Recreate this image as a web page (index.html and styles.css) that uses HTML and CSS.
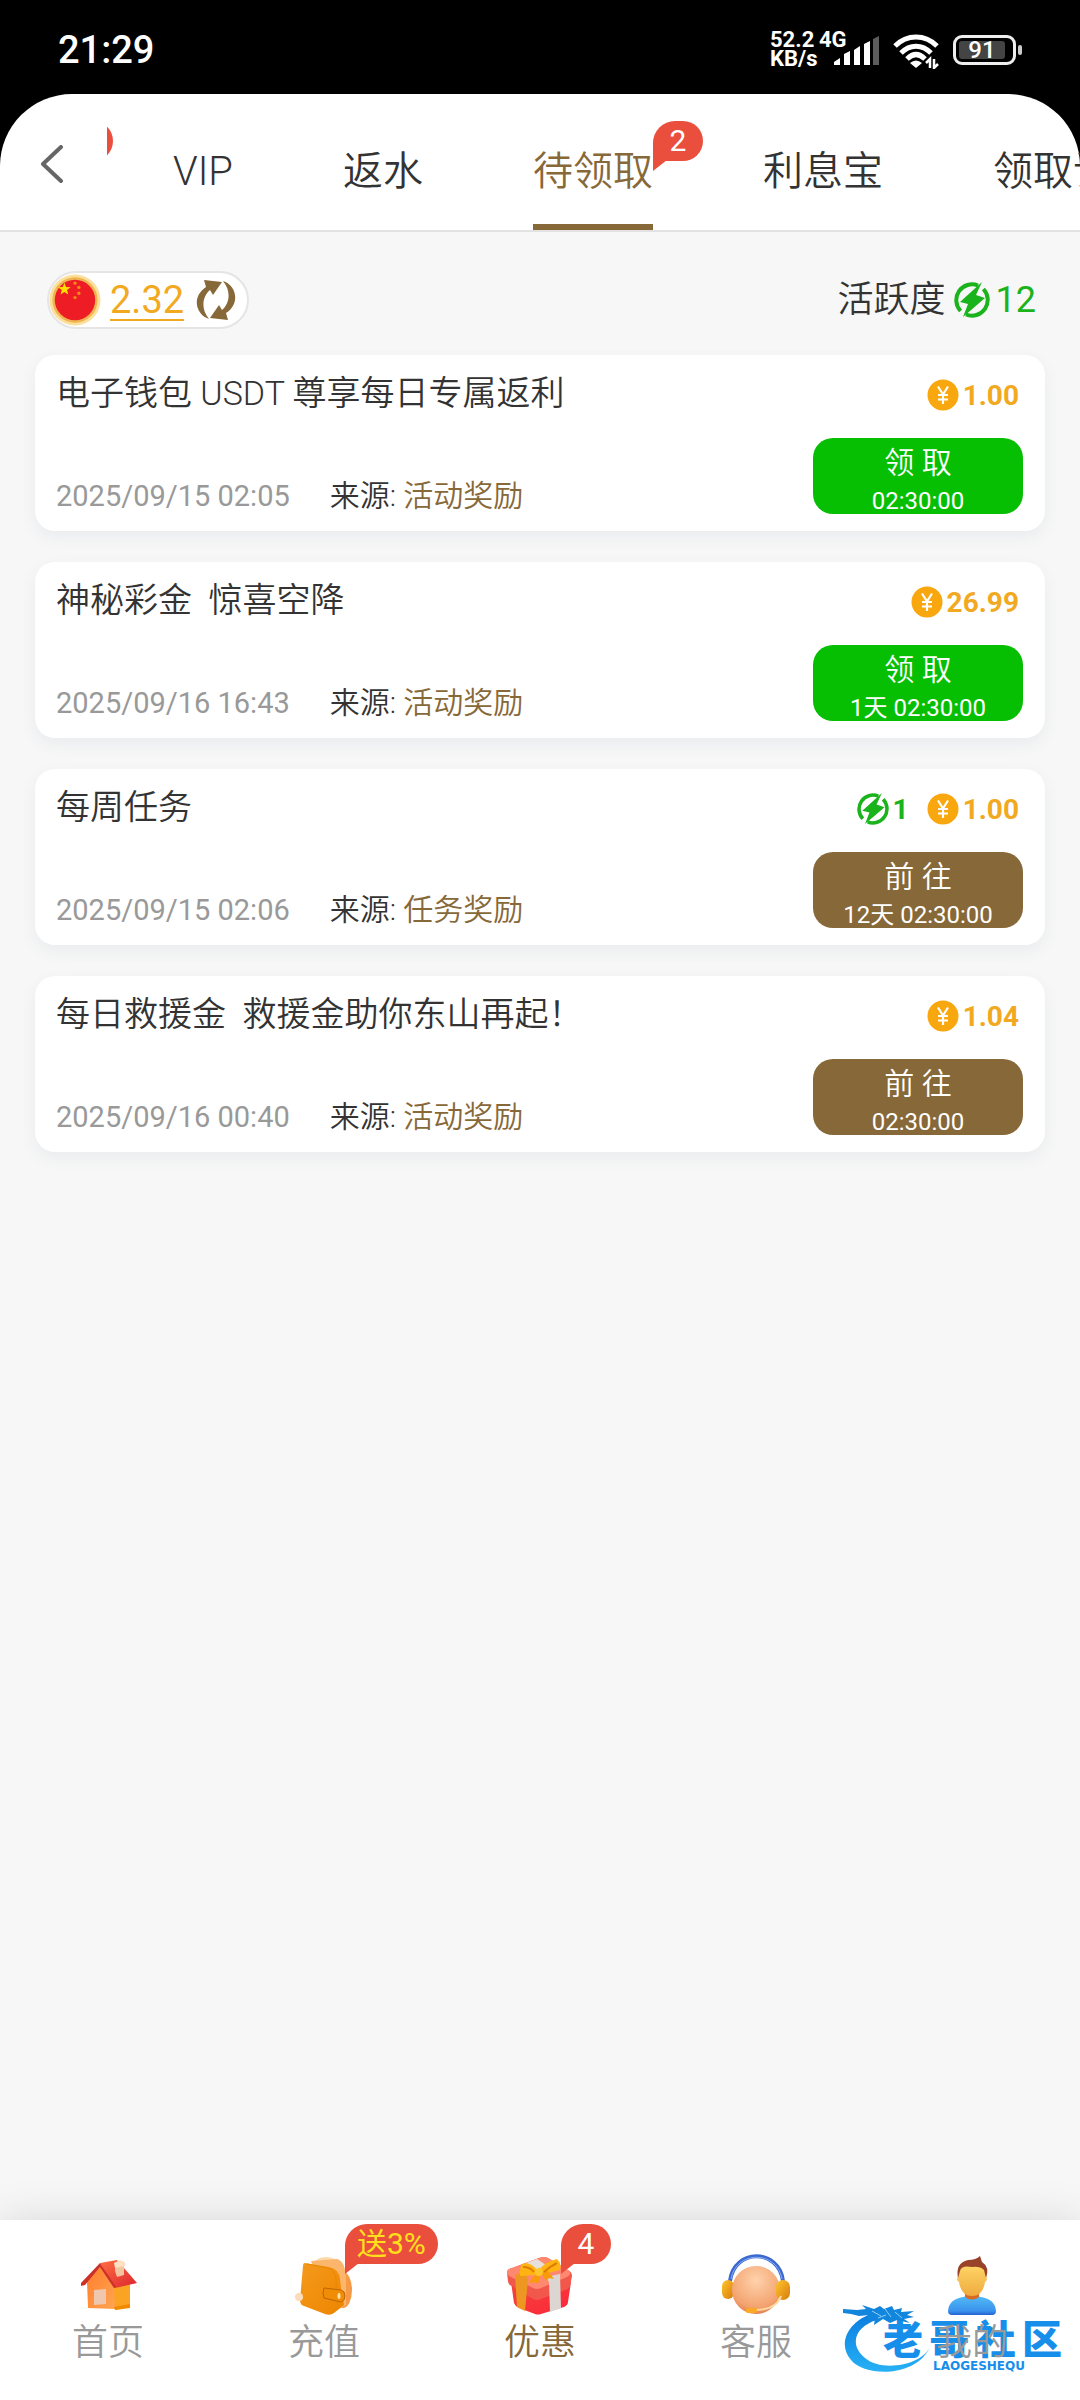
FILE: index.html
```html
<!DOCTYPE html>
<html lang="zh-CN">
<head>
    <meta charset="UTF-8">
    <meta name="viewport" content="width=device-width, initial-scale=1.0">
    <title>待领取</title>
    <link rel="stylesheet" href="styles.css">
</head>
<body>
    <!-- Shared icons -->
    <svg class="sprite" aria-hidden="true">
        <symbol id="bolt" viewBox="0 0 36 36">
            <path d="M24 3.500A15.800 15.800 0 0 0 6.600 29" fill="none" stroke="currentColor" stroke-width="4"/>
            <path d="M29.400 7A15.800 15.800 0 0 1 12 32.500" fill="none" stroke="currentColor" stroke-width="4"/>
            <path d="M28 0L6 20l8 2L9 35l22-19-9-3z" fill="currentColor"/>
        </symbol>
        <symbol id="coin" viewBox="0 0 32 32">
            <circle cx="16" cy="16" r="15.500" fill="#f9a70e"/>
            <path d="M11 7.500l5 8 5-8M16 15.500V25M11 16h10M11 20.500h10" fill="none" stroke="#fff" stroke-width="2.200"/>
        </symbol>
    </svg>

    <div class="status-bar">
        <span class="clock">21:29</span>
        <div class="status-icons">
            <div class="net-speed"><span>52.2</span><span>KB/s</span></div>
            <div class="signal">
                <span>4G</span>
                <svg width="46" height="32" viewBox="0 0 46 32" aria-hidden="true">
                    <g fill="#fff">
                        <path d="M0 31v-3l6-4v7z"/>
                        <path d="M10 31V20l6-3v14z"/>
                        <path d="M20 31V16l6-4v19z"/>
                        <path d="M30 31V10l6-3v24z"/>
                    </g>
                    <path d="M39 31V5l6-3v29z" fill="#5c5c5c"/>
                </svg>
            </div>
            <svg class="wifi" width="46" height="36" viewBox="0 0 46 36" aria-hidden="true">
                <g fill="none" stroke="#fff" stroke-width="5">
                    <path d="M2 13C14 1 32 1 44 13"/>
                    <path d="M8 20C17 11 29 11 38 20"/>
                    <path d="M14 26c6-6 12-6 18 0"/>
                </g>
                <path d="M17 30q6-5 12 0l-6 5z" fill="#fff"/>
                <path d="M33 30l4-4v9M41 35v-9 9l4-4" fill="none" stroke="#fff" stroke-width="2.500"/>
            </svg>
            <div class="battery"><span>91</span></div>
        </div>
    </div>

    <div class="top-wrap">
        <header class="top-bar">
            <button class="back" aria-label="返回">
                <svg width="24" height="38" viewBox="0 0 24 38"><path d="M21 2L3 19l18 17" fill="none" stroke="#666" stroke-width="4" stroke-linecap="round" stroke-linejoin="round"/></svg>
            </button>
            <nav class="tabs">
                <div class="tab-track">
                    <a href="#" class="tab" aria-label="上一项"><span class="tab-label"><span class="badge"></span></span></a>
                    <a href="#" class="tab"><span class="tab-label">VIP</span></a>
                    <a href="#" class="tab"><span class="tab-label">返水</span></a>
                    <a href="#" class="tab active"><span class="tab-label">待领取<span class="badge">2</span></span></a>
                    <a href="#" class="tab"><span class="tab-label">利息宝</span></a>
                    <a href="#" class="tab"><span class="tab-label">领取记录</span></a>
                </div>
            </nav>
        </header>
    </div>

    <main class="content">
        <div class="summary">
            <div class="wallet">
                <svg width="52" height="52" viewBox="0 0 54 54" aria-hidden="true">
                    <circle cx="27" cy="27" r="26.500" fill="#fbdf9b"/>
                    <circle cx="27" cy="27" r="23.500" fill="#efb350"/>
                    <circle cx="27" cy="27" r="21" fill="#ee1c25"/>
                    <path d="M16 9l1.700 4.500 4.800.2-3.800 3 1.300 4.600-4-2.600-4 2.600 1.300-4.600-3.800-3 4.800-.2z" fill="#ffde00"/>
                    <g fill="#f88a1a">
                        <circle cx="27" cy="9.500" r="1.700"/>
                        <circle cx="31" cy="14" r="1.700"/>
                        <circle cx="31" cy="20" r="1.700"/>
                        <circle cx="27" cy="24.500" r="1.700"/>
                    </g>
                </svg>
                <a href="#" class="balance">2.32</a>
                <button class="refresh" aria-label="刷新">
                    <svg width="42" height="42" viewBox="0 0 42 42" fill="#876839">
                        <path d="M9 1l18 2-9 13-3-5C8 17 5 29 14 40 1 36-4 18 11 8z"/>
                        <path d="M33 41l-18-2 9-13 3 5c7-6 10-18 1-29 13 4 18 22 3 32z"/>
                    </svg>
                </button>
            </div>
            <div class="activity">
                <span>活跃度</span>
                <svg class="bolt"><use href="#bolt"/></svg>
                <span class="activity-value">12</span>
            </div>
        </div>

        <div class="reward-list">
            <article class="card">
                <h2 class="card-title">电子钱包 USDT 尊享每日专属返利</h2>
                <div class="amounts">
                    <span class="amount"><svg class="icon"><use href="#coin"/></svg>1.00</span>
                </div>
                <p class="meta"><time>2025/09/15 02:05</time><span>来源: <em>活动奖励</em></span></p>
                <button class="action claim">领 取<small>02:30:00</small></button>
            </article>

            <article class="card">
                <h2 class="card-title">神秘彩金  惊喜空降</h2>
                <div class="amounts">
                    <span class="amount"><svg class="icon"><use href="#coin"/></svg>26.99</span>
                </div>
                <p class="meta"><time>2025/09/16 16:43</time><span>来源: <em>活动奖励</em></span></p>
                <button class="action claim">领 取<small>1天 02:30:00</small></button>
            </article>

            <article class="card">
                <h2 class="card-title">每周任务</h2>
                <div class="amounts">
                    <span class="amount points"><svg class="icon"><use href="#bolt"/></svg>1</span>
                    <span class="amount"><svg class="icon"><use href="#coin"/></svg>1.00</span>
                </div>
                <p class="meta"><time>2025/09/15 02:06</time><span>来源: <em>任务奖励</em></span></p>
                <button class="action">前 往<small>12天 02:30:00</small></button>
            </article>

            <article class="card">
                <h2 class="card-title">每日救援金  救援金助你东山再起！</h2>
                <div class="amounts">
                    <span class="amount"><svg class="icon"><use href="#coin"/></svg>1.04</span>
                </div>
                <p class="meta"><time>2025/09/16 00:40</time><span>来源: <em>活动奖励</em></span></p>
                <button class="action">前 往<small>02:30:00</small></button>
            </article>
        </div>
    </main>

    <nav class="bottom-nav">
        <!-- Community logo -->
        <div class="community">
            <svg class="dragon" width="90" height="74" viewBox="0 0 90 74" aria-hidden="true">
                <defs>
                    <linearGradient id="sea" x1="0" y1="0" x2="0" y2="1">
                        <stop offset="0" stop-color="#0b7de0"/>
                        <stop offset="1" stop-color="#27b1f5"/>
                    </linearGradient>
                </defs>
                <path d="M28 11C5 19-6 41 8 57c14 17 65 18 79-13-9 19-49 25-65 11C5 41 13 23 34 17z" fill="url(#sea)"/>
                <path d="M0 6l14 1 9-1-4-4 12 4 6-3 4 3 8-3 2 4 8-2-1 4 13-1-7 4 7 2-10 2 6 4-13-3-7 3-7-4-9 6 1-7-9 3 3-6-10 1-8-2-9-1z" fill="#1285dd"/>
                <path d="M29 8l9 5M42 6l6 8M52 9l7 6M35 15l8-3" fill="none" stroke="#8fd0fa" stroke-width="1"/>
            </svg>
            <div class="community-name"><span>老</span><span>哥</span><span>社</span><span>区</span></div>
            <div class="community-sub">LAOGESHEQU</div>
        </div>

        <a href="#" class="nav-item">
            <svg class="nav-icon" viewBox="0 0 60 60" aria-hidden="true">
                <defs>
                    <linearGradient id="roof" x1="0" y1="0" x2="1" y2="1">
                        <stop offset="0" stop-color="#ff7043"/>
                        <stop offset="1" stop-color="#dc2430"/>
                    </linearGradient>
                    <linearGradient id="wall" x1="0" y1="0" x2="1" y2="1">
                        <stop offset="0" stop-color="#ff7d2c"/>
                        <stop offset="1" stop-color="#ffa552"/>
                    </linearGradient>
                </defs>
                <path d="M9 26L22 11l15 20v23L10 53z" fill="url(#wall)"/>
                <path d="M36 31l16-4v25l-15 3z" fill="#fba322"/>
                <path d="M36 52l16-3v4l-15 2z" fill="#f28a00"/>
                <path d="M22 8l17-3 20 23-22 5z" fill="url(#roof)"/>
                <path d="M22 8L3 28v3l4-1 15-18 14 21 2-1z" fill="#cc3029"/>
                <path d="M16 35l12-1v15l-12 1z" fill="#efc7ae"/>
                <path d="M37 9l9-2v13l-7 2-2-6z" fill="#f2c4a0"/>
                <path d="M36 8l6-3 5 2v4l-10 2z" fill="#ffe0c3"/>
            </svg>
            <span>首页</span>
        </a>
        <a href="#" class="nav-item">
            <svg class="nav-icon" viewBox="0 0 60 60" aria-hidden="true">
                <defs>
                    <linearGradient id="leather" x1="0" y1="0" x2="1" y2="1">
                        <stop offset="0" stop-color="#f59a1d"/>
                        <stop offset="1" stop-color="#ed8500"/>
                    </linearGradient>
                </defs>
                <ellipse cx="49" cy="35" rx="9" ry="18" fill="#f69a45"/>
                <ellipse cx="32" cy="12" rx="14" ry="10" fill="#ffd9ad"/>
                <path d="M17 6l26-2q8 2 9 18v28l-16 9z" fill="#fbb66b"/>
                <path d="M11 8q-2 0-2 3L6 45q0 5 4 6l21 8q5 2 9-1l10-8q0-3-2-8l-2-18Q45 14 35 12z" fill="url(#leather)"/>
                <path d="M13 9l20 4q9 2 9 12l2 27-8 7" fill="none" stroke="#e88900" stroke-width="1"/>
                <path d="M30 33l17 2q4 1 4 6t-4 6l-17-4q-2-5 0-10z" fill="#f18c06" stroke="#bd6500"/>
                <ellipse cx="45" cy="41" rx="1.500" ry="3" fill="#ffe3ac"/>
                <circle cx="5" cy="42" r="4" fill="#fbdcba"/>
            </svg>
            <span class="badge promo">送3%</span>
            <span>充值</span>
        </a>
        <a href="#" class="nav-item active">
            <svg class="nav-icon" viewBox="0 0 60 60" aria-hidden="true">
                <defs>
                    <linearGradient id="box" x1="0" y1="0" x2="1" y2="1">
                        <stop offset="0" stop-color="#f0473c"/>
                        <stop offset="1" stop-color="#ff2439"/>
                    </linearGradient>
                </defs>
                <path d="M1 27l3 21q1 3 5 5l16 6q3 1 6 0l23-7q4-2 4-5l3-20z" fill="url(#box)"/>
                <path d="M-3 18q0-4 5-5L29 3q5-2 9 0l20 12q4 2 4 6l-2 10q-1 3-5 4l-24 9q-4 2-8 0L2 31q-4-1-4-5z" fill="#f1574b"/>
                <path d="M-3 18q0-4 5-5L29 3q5-2 9 0l20 12q5 4-1 7L31 33q-4 2-8 0L1 22q-4-2-4-4z" fill="#ff8970"/>
                <path d="M16 8l11-4 9 6-9 5z" fill="#e6dfda"/>
                <path d="M36 22l14-3 1 34-11 4-1-30z" fill="#dcd6d2"/>
                <path d="M5 20l10-4 3 9-3 31-8-4z" fill="#ee9622"/>
                <path d="M27 15q-7-9-15-6-3 6-2 12l19-1zM29 15q7-9 18-11 5 5 3 11l-19 5z" fill="#ffb413"/>
                <path d="M27 18L18 28l7-1 3 2 3-11 5 8 3-3 5 1-7-9z" fill="#f99a0b"/>
                <path d="M13 12q7 0 11 5M47 8q-8 4-13 9" fill="none" stroke="#dd7d00" stroke-width="2"/>
                <circle cx="29" cy="17" r="4" fill="#ffc62b"/>
            </svg>
            <span class="badge">4</span>
            <span>优惠</span>
        </a>
        <a href="#" class="nav-item">
            <svg class="nav-icon" viewBox="0 0 60 60" aria-hidden="true">
                <defs>
                    <radialGradient id="face" cx=".5" cy=".3" r=".8">
                        <stop offset="0" stop-color="#ffd2ac"/>
                        <stop offset=".7" stop-color="#f3a36f"/>
                        <stop offset="1" stop-color="#d96c43"/>
                    </radialGradient>
                    <linearGradient id="ear" x1="0" y1="0" x2="1" y2="1">
                        <stop offset="0" stop-color="#ffc52d"/>
                        <stop offset="1" stop-color="#d77b0c"/>
                    </linearGradient>
                </defs>
                <path d="M4 26C8-7 53-7 57 26" fill="none" stroke="#3d68cf" stroke-width="4"/>
                <path d="M5 24C10-5 51-5 56 24" fill="none" stroke="#86aef4" stroke-width="1"/>
                <rect x="-4" y="25" width="12" height="19" rx="6" fill="url(#ear)"/>
                <circle cx="30" cy="35" r="24" fill="url(#face)"/>
                <rect x="50" y="25" width="14" height="20" rx="7" fill="url(#ear)"/>
                <path d="M55 41Q50 55 29 55" fill="none" stroke="#ffd8a0" stroke-width="2"/>
                <rect x="20" y="53" width="11" height="5" rx="2" fill="#fba927"/>
            </svg>
            <span>客服</span>
        </a>
        <a href="#" class="nav-item">
            <svg class="nav-icon" viewBox="0 0 60 60" aria-hidden="true">
                <defs>
                    <linearGradient id="skin" x1="0" y1="0" x2="0" y2="1">
                        <stop offset="0" stop-color="#ffda6a"/>
                        <stop offset="1" stop-color="#efaa3f"/>
                    </linearGradient>
                    <linearGradient id="shirt" x1="0" y1="0" x2="0" y2="1">
                        <stop offset="0" stop-color="#54bdf8"/>
                        <stop offset=".8" stop-color="#3a93ec"/>
                        <stop offset="1" stop-color="#2361d0"/>
                    </linearGradient>
                </defs>
                <path d="M6 56q1-12 15-14l9-2 9 2q14 2 15 14 0 4-4 4H10q-4 0-4-4z" fill="url(#shirt)"/>
                <path d="M23 35h14v7q-7 5-14 0z" fill="#d86a24"/>
                <path d="M16 20Q16 7 30 7t14 13l1 5-2 2q-2 14-13 14T17 27l-2-2z" fill="url(#skin)"/>
                <path d="M16 23Q13 8 26 5q8 0 12-4l2 6q8 5 4 16l-2-8q-4-4-12-3-11-2-12 4z" fill="#98422a"/>
            </svg>
            <span>我的</span>
        </a>
    </nav>
</body>
</html>
```
FILE: styles.css
```css
:root {
    --brand: #876839;
    --gold: #f2a922;
    --green: #1bb31b;
    --red: #ea4e3d;
    --text: #333;
    --muted: #999;
}

* {
    box-sizing: border-box;
}

body {
    margin: 0;
    min-height: 100vh;
    display: flex;
    flex-direction: column;
    background: #f7f7f7;
    color: var(--text);
    font-family: Roboto, "Noto Sans CJK SC", sans-serif;
    font-weight: 350;
}

a {
    color: inherit;
    text-decoration: none;
}

button {
    padding: 0;
    border: none;
    background: none;
    color: inherit;
    font: inherit;
    cursor: pointer;
}

.sprite {
    position: absolute;
    width: 0;
    height: 0;
}

/* Status bar */
.status-bar {
    display: flex;
    justify-content: space-between;
    align-items: flex-start;
    height: 94px;
    padding: 30px 58px 0;
    background: #000;
    color: #fff;
}

.clock {
    font-size: 38px;
    line-height: 40px;
    font-weight: 500;
}

.status-icons {
    display: flex;
    align-items: flex-start;
}

.net-speed {
    display: flex;
    flex-direction: column;
    width: 49px;
    font-size: 22px;
    line-height: 19px;
    font-weight: 700;
}

.signal {
    display: flex;
    flex-direction: column;
    width: 61px;
    height: 36px;
    margin-right: 13px;
    font-size: 22px;
    line-height: 20px;
    font-weight: 700;
}

.signal svg {
    align-self: flex-end;
    margin-top: -16px;
    flex: none;
}

.wifi {
    margin: 3px 14px 0 0;
}

.battery {
    position: relative;
    width: 63px;
    height: 30px;
    margin: 5px 6px 0 0;
    padding: 3px;
    border: 3px solid #eee;
    border-radius: 9px;
}

.battery::after {
    content: "";
    position: absolute;
    top: 7px;
    right: -9px;
    width: 4px;
    height: 10px;
    border-radius: 2px;
    background: #ccc;
}

.battery span {
    display: block;
    width: 46px;
    border-radius: 3px;
    background: #444;
    font-size: 24px;
    line-height: 18px;
    font-weight: 500;
    text-align: center;
}

/* Header */
.top-wrap {
    background: #000;
}

.top-bar {
    display: flex;
    height: 138px;
    border-bottom: 2px solid #e2e2e2;
    border-radius: 72px 72px 0 0;
    background: #fff;
}

.back {
    width: 107px;
    padding: 8px 3px 0 0;
    flex: none;
}

.tabs {
    flex: 1;
    min-width: 0;
    overflow: hidden;
}

.tab-track {
    display: flex;
    height: 100%;
    margin-left: -99px;
}

.tab {
    flex: none;
    padding: 0 55px;
    font-size: 40px;
    line-height: 40px;
    white-space: nowrap;
}

.tab-label {
    position: relative;
    display: block;
    height: 100%;
    padding-top: 58px;
}

.tab.active .tab-label {
    border-bottom: 6px solid var(--brand);
    color: var(--brand);
}

.badge {
    position: absolute;
    top: 27px;
    left: 100%;
    min-width: 50px;
    height: 40px;
    padding: 0 12px;
    border-radius: 22px 20px 20px 0;
    background: var(--red);
    color: #fff;
    font-size: 30px;
    line-height: 40px;
    font-weight: 400;
    text-align: center;
}

.badge::after {
    content: "";
    position: absolute;
    top: 39px;
    left: 0;
    width: 14px;
    height: 11px;
    background: inherit;
    clip-path: polygon(0 0, 100% 0, 0 100%);
}

/* Content */
.content {
    flex: 1;
    padding: 39px 35px;
}

.summary {
    display: flex;
    justify-content: space-between;
    align-items: center;
    padding: 0 9px 0 12px;
    font-size: 36px;
}

.wallet {
    display: flex;
    align-items: center;
    height: 58px;
    padding-right: 10px;
    border: 2px solid #e5e5e5;
    border-radius: 29px;
    background: #fff;
}

.balance {
    margin: 2px 11px 0 9px;
    border-bottom: 2px solid var(--gold);
    color: var(--gold);
    font-size: 38px;
    line-height: 38px;
    font-weight: 400;
}

.refresh {
    display: flex;
}

.activity {
    display: flex;
    align-items: center;
    line-height: 50px;
}

.bolt {
    width: 36px;
    height: 36px;
    margin: 0 6px 0 8px;
    color: var(--green);
}

.activity-value {
    color: var(--green);
    font-weight: 400;
}

.reward-list {
    display: flex;
    flex-direction: column;
    gap: 31px;
    margin-top: 26px;
}

.card {
    display: grid;
    grid-template-columns: 1fr auto;
    grid-template-rows: 52px 76px;
    row-gap: 19px;
    padding: 12px 22px 17px 21px;
    border-radius: 20px;
    background: #fff;
    box-shadow: 0 6px 16px rgba(60, 90, 120, 0.07);
}

.card-title {
    margin: 0;
    font-size: 34px;
    line-height: 52px;
    font-weight: inherit;
    white-space: pre;
}

.amounts {
    display: flex;
    justify-content: flex-end;
    align-items: center;
    gap: 18px;
    padding: 4px 4px 0 0;
}

.amount {
    display: flex;
    align-items: center;
    gap: 4px;
    color: var(--gold);
    font-size: 28px;
    font-weight: 700;
}

.points {
    color: var(--green);
}

.icon {
    width: 32px;
    height: 32px;
}

.meta {
    display: flex;
    align-items: baseline;
    gap: 40px;
    margin: 0;
    align-self: end;
    font-size: 30px;
    line-height: 36px;
}

.meta time {
    color: var(--muted);
    font-size: 29px;
    font-weight: 400;
}

.meta em {
    color: var(--brand);
    font-style: normal;
}

.action {
    display: flex;
    flex-direction: column;
    align-items: center;
    justify-self: end;
    width: 210px;
    height: 76px;
    padding-top: 1px;
    border-radius: 20px;
    background: var(--brand);
    color: #fff;
    font-size: 30px;
    line-height: 48px;
}

.action small {
    font-size: 24px;
    line-height: 28px;
    font-weight: 400;
}

.claim {
    background: #06bf03;
}

/* Bottom navigation */
.bottom-nav {
    position: relative;
    display: flex;
    height: 180px;
    background: #fff;
    box-shadow: 0 0 40px rgba(0, 0, 0, 0.13);
}

.nav-item {
    position: relative;
    flex: 1;
    display: flex;
    flex-direction: column;
    align-items: center;
    padding-top: 35px;
    color: var(--muted);
    font-size: 36px;
    line-height: 56px;
}

.nav-item.active {
    color: var(--brand);
}

.nav-icon {
    width: 60px;
    height: 60px;
    overflow: visible;
}

.nav-item .badge {
    top: 4px;
    left: calc(50% + 21px);
}

.nav-item .promo {
    color: #ffe01b;
    white-space: nowrap;
}

.community {
    position: absolute;
    top: 83px;
    right: 18px;
    width: 219px;
    height: 74px;
    color: #168eea;
}

.dragon {
    position: absolute;
    top: 0;
    left: 0;
}

.community-name {
    display: flex;
    justify-content: space-between;
    margin: 20px 0 0 40px;
    font-size: 40px;
    line-height: 36px;
    font-weight: 900;
}

.community-sub {
    padding-left: 90px;
    font-family: "DejaVu Sans", sans-serif;
    font-size: 12px;
    line-height: 14px;
    font-weight: 700;
}
```
